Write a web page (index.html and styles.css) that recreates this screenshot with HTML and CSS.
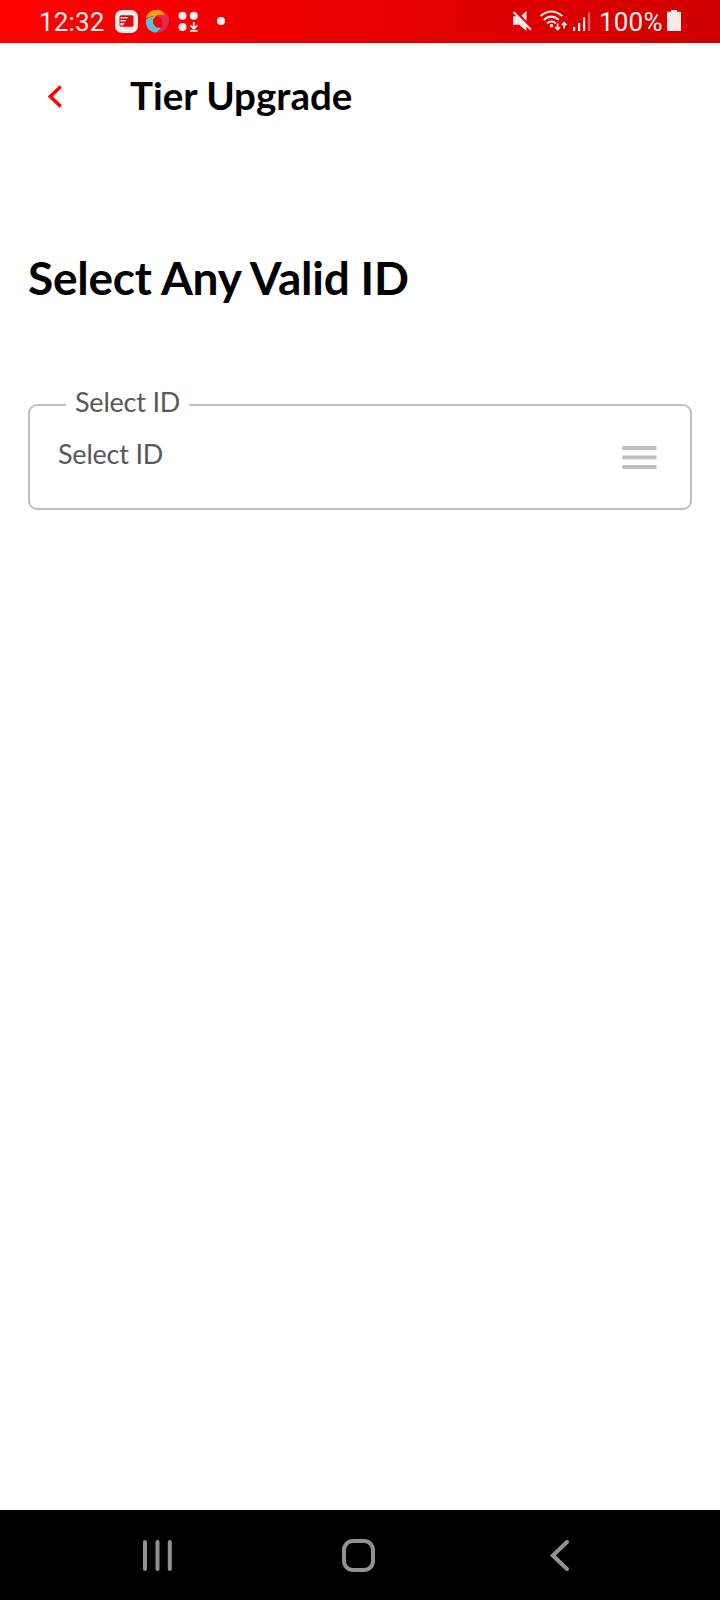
FILE: index.html
```html
<!DOCTYPE html>
<html lang="en">
<head>
<meta charset="utf-8">
<title>Tier Upgrade</title>
<link rel="stylesheet" href="styles.css">
</head>
<body>
<div class="screen">
  <div class="status">
    <span class="clock">12:32</span>
    <svg class="notices" width="112" height="43" viewBox="115 0 112 43" fill="#ffebeb">
      <rect x="115" y="10" width="23" height="23" rx="7"/>
      <rect x="119.500" y="15.300" width="14" height="11.500" rx="1.500" fill="#dc0a0a"/>
      <path d="M120.500 17h7.300l-.8 1.500h-6.500zM120.500 20h5.800l-.9 1.500h-4.900zM120.500 23h4.200l-1.800 2.600h-2.400z"/>
      <path d="M146 18.500C147 13 151 9.700 157.500 9.700c4 0 6.500 2.500 7.500 6-3-1.500-7-1.500-10 1.300-2-.8-5.500-.8-9 1.500z" fill="#ffa30f"/>
      <path d="M146 19.500c3-2.500 6-3 9-2.500-2.200 2.500-2.300 5-1 7.500 1.500 2.700 4 3.700 7 3-1 2.500-3 4-5.500 5.200C149 32 145 26.500 146 19.500z" fill="#60bfd8"/>
      <path d="M164 11.500c4.200 2.500 6.200 7.500 4.500 12.500-1.500 5-5.500 8.500-12.500 8.700 3-1.200 4.500-3 5-5.200 1.800-2 2-5 .8-7.500-1-2-2.800-3.500-5.800-3.800 2.500-1.800 6-1.800 9-.5z" fill="#df2a58"/>
      <circle cx="157.300" cy="21.700" r="4.300" fill="#f60000"/>
      <circle cx="182.500" cy="15.700" r="4"/><circle cx="193.800" cy="15.700" r="4"/><circle cx="182.500" cy="27" r="4"/>
      <path d="M193.800 22v6.500m-3.400-3 3.400 3.300 3.400-3.300M190 30.800h7.600" fill="none" stroke="#ffebeb" stroke-width="1.800"/>
      <circle cx="221" cy="21" r="4.100"/>
    </svg>
    <span class="spacer"></span>
    <svg class="signals" width="80" height="43" viewBox="512 0 80 43" fill="#fbe9e9">
      <path d="M513 16.300h5L526.500 25v6l-7.500-6.300h-6zM521.500 15.500l5-4.500v10z"/>
      <path d="M513.500 12 531 29.700" stroke="#fbe9e9" stroke-width="2" fill="none"/>
      <g fill="none" stroke="#fbe9e9" stroke-width="2"><path d="M540.500 16q10.700-9 21.800 0"/><path d="M543.800 19.800q7.500-6.300 15 0"/><path d="M547 23.300q4.500-3.500 8.800 0"/></g>
      <circle cx="551.500" cy="25.800" r="1.800"/>
      <path d="M557.600 23.500v5.800m-2.400-2.200 2.400 2.400 2.400-2.400M564.200 28.500v-5.500m-2.400 2.200 2.400-2.400 2.400 2.400" fill="none" stroke="#fbe9e9" stroke-width="1.700"/>
      <path d="M573 27h2.200v4H573zM578 23h2.200v8H578zM583 17.500h2.200V31H583z"/><path opacity=".4" d="M588 12.500h2.200V31H588z"/>
    </svg>
    <span class="percent">100%</span>
    <svg class="battery" width="14" height="43" viewBox="667 0 14 43"><path d="M671 10h6v1.800h3q1 0 1 1V30q0 1-1 1h-12q-1 0-1-1V12.800q0-1 1-1h3z" fill="#fbe9e9"/></svg>
  </div>
  <header class="appbar">
    <svg width="16" height="24" viewBox="48 85 16 24"><path d="M60.700 86.500 50.300 96.500 60.700 106.500" fill="none" stroke="#f00" stroke-width="3.400"/></svg>
    <h1 class="title">Tier Upgrade</h1>
  </header>
  <main class="content">
    <h2 class="heading">Select Any Valid ID</h2>
    <fieldset class="field">
      <legend class="legend"><span class="label">Select ID</span></legend>
      <div class="row">
        <span class="value">Select ID</span>
        <svg class="menu" width="35" height="24" viewBox="0 0 35 24" fill="#bfbfbf"><path d="M.3 0h34.200v4H.3zM.3 9.500h34.200v3.700H.3zM.3 19h34.200v4H.3z"/></svg>
      </div>
    </fieldset>
  </main>
  <nav class="nav">
    <svg width="720" height="90" viewBox="0 1510 720 90" fill="none" stroke="#929292" stroke-width="4" stroke-linecap="round">
      <path d="M145 1542v27M157.500 1542v27M169.800 1542v27"/>
      <rect x="344" y="1541" width="29" height="29" rx="9"/>
      <path d="M567 1542 552.800 1555.500 567 1569"/>
    </svg>
  </nav>
</div>
</body>
</html>
```
FILE: styles.css
```css
* { box-sizing: border-box; }
body { margin: 0; background: #fff; font-family: Lato, sans-serif; }
.screen { width: 720px; height: 1600px; display: flex; flex-direction: column; overflow: hidden; }
.status { height: 43px; display: flex; align-items: center; padding: 0 39px; background: linear-gradient(90deg, #f00, #d00000); color: #fff0f0; font: 26px/43px Roboto, sans-serif; }
.status svg { display: block; flex: none; }
.clock { width: 76px; white-space: nowrap; padding-top: 1px; letter-spacing: .15px; }
.spacer { flex: 1; }
.percent { width: 75px; padding: 1px 0 0 7px; white-space: nowrap; letter-spacing: .2px; }
.appbar { height: 107px; display: flex; align-items: center; gap: 66px; padding-left: 48px; }
.title { margin: 0; padding-bottom: 4px; font-size: 38.5px; line-height: 46px; font-weight: 700; }
.content { flex: 1; padding: 100px 28px 0; }
.heading { margin: 0; font-size: 46px; line-height: 56px; font-weight: 700; letter-spacing: -.24px; }
.field { height: 122px; margin: 82px 0 0; padding: 0 33px 0 28px; border: 2px solid #bfbfbf; border-radius: 9px; color: #585858; font-size: 27px; letter-spacing: -.22px; }
.legend { margin-left: 8px; padding: 0 9px; line-height: 34px; }
.label { display: block; height: 34px; line-height: 28px; }
.row { display: flex; justify-content: space-between; align-items: center; height: 70px; }
.value { line-height: 34px; padding-bottom: 7px; }
.menu { display: block; margin-top: 2px; }
.nav { height: 90px; background: #000; }
.nav svg { display: block; }
```
